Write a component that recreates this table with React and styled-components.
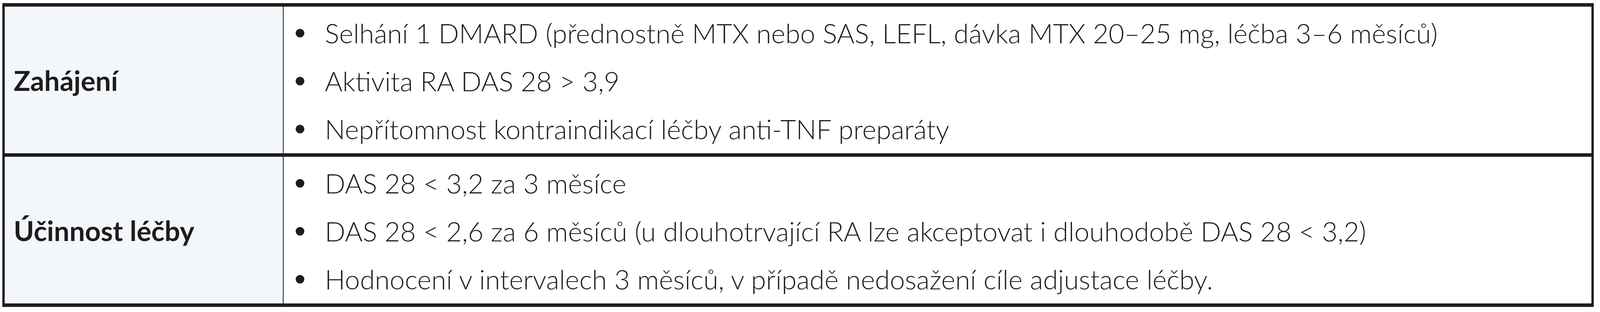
import React from "react";
import styled, { createGlobalStyle } from "styled-components";

// Reference is drawn on a 5312px wide canvas; horizontal sizes use vw so the
// table keeps its proportions in whatever width the window really has.
const GlobalStyle = createGlobalStyle`
  body {
    margin: 8px 0 0 0.15vw;
    background: #ffffff;
    font-family: Lato, "Open Sans", "Liberation Sans", sans-serif;
    color: #1d1d1b;
  }
`;

const Table = styled.div`
  width: 99.45vw;
  box-sizing: border-box;
  border-style: solid;
  border-color: #1e1e1e;
  border-width: 9px 0.16vw;
  display: flex;
  flex-direction: column;
`;

const Row = styled.div`
  display: flex;
  height: 376px;
  border-top: ${(p) => (p.$first ? "none" : "9px solid #1e1e1e")};
`;

const Label = styled.div`
  width: 17.43vw;
  flex-shrink: 0;
  box-sizing: border-box;
  background: #f3f7fc;
  border-right: 0.06vw solid #1e1e1e;
  padding-left: 0.56vw;
  display: flex;
  align-items: center;
  font-size: 1.72vw;
  font-weight: 700;
  line-height: 123px;
  white-space: nowrap;
`;

const Content = styled.div`
  flex: 1;
  min-width: 0;
  background: #ffffff;
  padding: 6px 0;
  box-sizing: border-box;
`;

const List = styled.ul`
  list-style: none;
  margin: 0;
  padding: 0;
`;

const Item = styled.li`
  display: flex;
  align-items: center;
  font-size: 1.69vw;
  font-weight: 300;
  line-height: 123px;
  white-space: nowrap;

  &::before {
    content: "";
    width: 22px;
    height: 22px;
    border-radius: 50%;
    background: #1d1d1b;
    margin-left: 0.76vw;
    margin-right: 1.28vw;
    flex-shrink: 0;
  }
`;

const rows = [
  {
    label: "Zahájení",
    items: [
      "Selhání 1 DMARD (přednostně MTX nebo SAS, LEFL, dávka MTX 20–25 mg, léčba 3–6 měsíců)",
      "Aktivita RA DAS 28 > 3,9",
      "Nepřítomnost kontraindikací léčby anti-TNF preparáty",
    ],
  },
  {
    label: "Účinnost léčby",
    items: [
      "DAS 28 < 3,2 za 3 měsíce",
      "DAS 28 < 2,6 za 6 měsíců (u dlouhotrvající RA lze akceptovat i dlouhodobě DAS 28 < 3,2)",
      "Hodnocení v intervalech 3 měsíců, v případě nedosažení cíle adjustace léčby.",
    ],
  },
];

export default function App() {
  return (
    <>
      <GlobalStyle />
      <Table>
        {rows.map((row, i) => (
          <Row key={row.label} $first={i === 0}>
            <Label>{row.label}</Label>
            <Content>
              <List>
                {row.items.map((item) => (
                  <Item key={item}>{item}</Item>
                ))}
              </List>
            </Content>
          </Row>
        ))}
      </Table>
    </>
  );
}
